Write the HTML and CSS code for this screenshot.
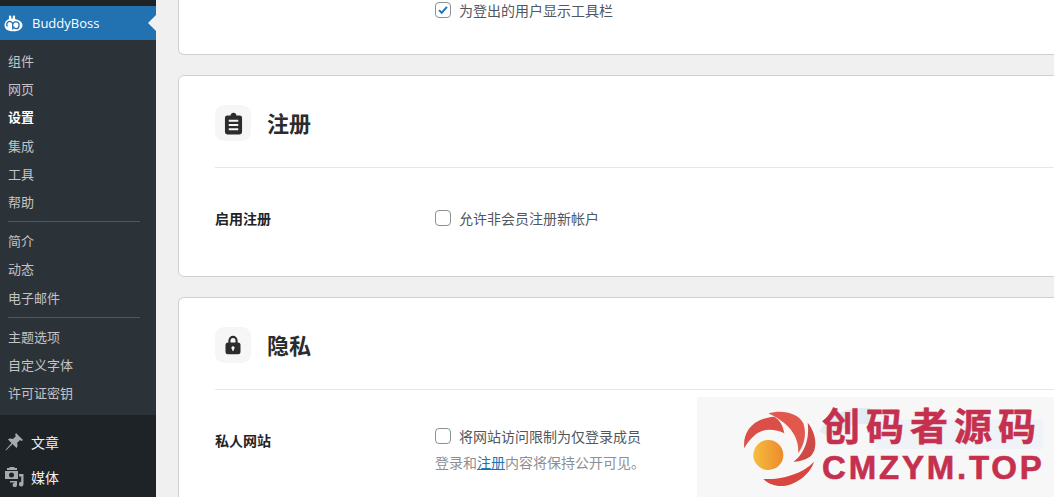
FILE: index.html
```html
<!DOCTYPE html>
<html lang="zh-CN">
<head>
    <meta charset="UTF-8">
    <meta name="viewport" content="width=device-width, initial-scale=1.0">
    <title>BuddyBoss 设置</title>
    <link rel="stylesheet" href="styles.css">
</head>
<body>
    <div class="layout">
        <!-- Admin sidebar -->
        <nav class="sidebar">
            <div class="menu-current">
                <svg viewBox="4 13 20 18" width="20" height="18">
                    <path fill="#fff" d="M9 15.500c0-1.300 2.300-1.300 2.300 0v2.200c.5-.1 1-.1 1.500-.1v-2.100c0-1.300 2.300-1.300 2.300 0v2.400c4 1 7.400 3.100 7.400 6.300 0 3.800-4.100 6.100-9 6.100s-9-1.600-9-6.100c0-3 2-5.200 4.500-6.200z"/>
                    <path fill="none" stroke="#2271b1" stroke-width="1.300" d="M7.500 25.500a3 3 0 1 1 5.200-2v5M12.700 23.500a3.200 3.200 0 0 1 6.300 1.200c0 2-1.500 3-3 3s-2.500-1-2.300-2.200"/>
                </svg>
                <span>BuddyBoss</span>
            </div>
            <ul class="submenu">
                <li>组件</li>
                <li>网页</li>
                <li class="active">设置</li>
                <li>集成</li>
                <li>工具</li>
                <li>帮助</li>
                <li class="sep"></li>
                <li>简介</li>
                <li>动态</li>
                <li>电子邮件</li>
                <li class="sep"></li>
                <li>主题选项</li>
                <li>自定义字体</li>
                <li>许可证密钥</li>
            </ul>
            <div class="menu-item">
                <svg viewBox="0 0 20 20" width="20" height="20">
                    <path fill="#a7aaad" d="M12 1l7 7-1.500 1-1.500-1-3 3c1 2 .5 4-.5 5l-4-4L2 18.500 1.500 18l6-7L4 7.500c1-1 3-1.500 5-.5l3-3-1-1z"/>
                </svg>
                <span>文章</span>
            </div>
            <div class="menu-item">
                <svg viewBox="0 0 20 20" width="20" height="20">
                    <path fill="#a7aaad" fill-rule="evenodd" d="M3 1h2l1-1h4l1 1h2v2H3zM1 4h13v8H1zM7.500 5.500a2.500 2.500 0 1 0 0 5 2.500 2.500 0 0 0 0-5zM15 7h4.500v10a2.300 2.300 0 1 1-2.300-2.200V9.500H15zM6 14h7v4a2.200 2.200 0 1 1-2.200-2.200V15.500H6z"/>
                </svg>
                <span>媒体</span>
            </div>
        </nav>

        <!-- Settings cards -->
        <main class="content">
            <section class="card card-cut">
                <div class="row row-first">
                    <div class="row-label"></div>
                    <div class="row-field">
                        <label class="check">
                            <span class="box">
                                <svg viewBox="0 0 16 16" width="16" height="16">
                                    <path fill="none" stroke="#2271b1" stroke-width="2.200" d="M3.500 8.200l3 3 6-6.800"/>
                                </svg>
                            </span>
                            为登出的用户显示工具栏
                        </label>
                    </div>
                </div>
            </section>

            <section class="card card-register">
                <header class="card-head">
                    <div class="head-icon">
                        <svg viewBox="0 0 20 24" width="19" height="23">
                            <path fill="#2c2c2c" fill-rule="evenodd" d="M7 3.500C7 1.800 8.300.8 10 .8s3 1 3 2.700h3.500A2.500 2.500 0 0 1 19 6v15a2.500 2.500 0 0 1-2.500 2.500h-13A2.500 2.500 0 0 1 1 21V6a2.500 2.500 0 0 1 2.500-2.500zM5 8v2.200h10V8zm0 4.500v2.200h10v-2.200zM5 17v2.200h10V17z"/>
                        </svg>
                    </div>
                    <h2>注册</h2>
                </header>
                <div class="row">
                    <div class="row-label">启用注册</div>
                    <div class="row-field">
                        <label class="check"><span class="box"></span>允许非会员注册新帐户</label>
                    </div>
                </div>
            </section>

            <section class="card card-last">
                <header class="card-head">
                    <div class="head-icon">
                        <svg viewBox="0 0 20 24" width="18" height="20">
                            <path fill="#2c2c2c" fill-rule="evenodd" d="M4.500 9V6.500a5.500 5.500 0 0 1 11 0V9h.5a3 3 0 0 1 3 3v8a3 3 0 0 1-3 3H4a3 3 0 0 1-3-3v-8a3 3 0 0 1 3-3zM7 9h6V6.500a3 3 0 0 0-6 0zm3 4.500a2 2 0 0 0-1 3.700V19h2v-1.800a2 2 0 0 0-1-3.700z"/>
                        </svg>
                    </div>
                    <h2>隐私</h2>
                </header>
                <div class="row row-tall">
                    <div class="row-label">私人网站</div>
                    <div class="row-field">
                        <label class="check"><span class="box"></span>将网站访问限制为仅登录成员</label>
                        <p class="hint">登录和<a href="#">注册</a>内容将保持公开可见。</p>
                    </div>
                </div>
            </section>
        </main>
    </div>

    <!-- Watermark lying over the page -->
    <div class="watermark">
        <svg class="wm-ghost" viewBox="0 0 240 100" width="237" height="100">
            <path fill="none" stroke="#e3ebf3" stroke-width="16" d="M12 38C22 22 42 15 62 20"/>
            <rect x="62" y="22" width="170" height="30" fill="#e9eff5" opacity=".6"/>
        </svg>
        <svg class="wm-swirl" viewBox="0 0 270 270" width="90" height="90">
            <defs>
                <linearGradient id="sun" x1="0" x2="1" y1="0" y2="0">
                    <stop offset="0" stop-color="#f6bd3f"/>
                    <stop offset="1" stop-color="#ec8a2c"/>
                </linearGradient>
            </defs>
            <path fill="#dc4f48" d="M28 145C22 100 50 55 118 50c17 10 27 30 30 50-28-15-68-15-88 5-15 13-25 25-32 40z"/>
            <path fill="#e2584d" d="M100 40c40-12 90-2 105 30 10 30 5 60-15 90 2-40-15-85-90-120z"/>
            <path fill="#cf4a46" d="M218 68c27 32 32 82 7 102-15 10-35 15-50 15 30-20 50-65 43-117z"/>
            <path fill="#d9463f" d="M85 237c45 3 115-12 152-52-12 40-62 77-107 73-20-3-35-10-45-21z"/>
            <circle cx="100" cy="165" r="45" fill="url(#sun)"/>
        </svg>
        <div class="wm-text">
            <div class="wm-title">创码者源码</div>
            <div class="wm-url">CMZYM.TOP</div>
        </div>
    </div>
</body>
</html>
```

FILE: styles.css
```css
/* General */
* {
    margin: 0;
    padding: 0;
    box-sizing: border-box;
}

html, body {
    height: 100%;
    overflow: hidden;
}

body {
    position: relative;
    background: #f0f0f1;
    color: #3c434a;
    font-family: "Noto Sans CJK SC", "Noto Sans", sans-serif;
    font-size: 14px;
}

.layout {
    display: flex;
    height: 497px;
    overflow: hidden;
}

/* Sidebar */
.sidebar {
    width: 156px;
    flex-shrink: 0;
    padding-top: 6px;
    background: #1d2327;
}

.menu-current {
    position: relative;
    display: flex;
    align-items: center;
    gap: 8px;
    height: 34px;
    padding-left: 4px;
    background: #2271b1;
    color: #fff;
    font-family: "Open Sans", "Noto Sans", sans-serif;
    font-size: 13px;
}

.menu-current::after {
    content: "";
    position: absolute;
    right: 0;
    top: 9px;
    border: 8px solid transparent;
    border-right-color: #f0f0f1;
    border-left-width: 0;
}

.submenu {
    list-style: none;
    height: 375px;
    padding-top: 7px;
    background: #2c3338;
    color: #c3c4c7;
    font-size: 13px;
}

.submenu li {
    height: 28.2px;
    padding-left: 8px;
    line-height: 28px;
}

.submenu .active {
    color: #fff;
    font-weight: 700;
}

.submenu .sep {
    height: 1px;
    width: 132px;
    margin: 5px 0 5px 8px;
    padding: 0;
    background: #50575e;
}

.menu-item {
    display: flex;
    align-items: center;
    gap: 7px;
    height: 35px;
    padding-left: 4px;
    color: #f0f0f1;
    font-size: 14px;
}

.submenu + .menu-item {
    margin-top: 9px;
}

/* Cards */
.content {
    flex: 1;
    min-width: 0;
    height: 497px;
    padding-left: 22px;
    overflow: hidden;
}

.card {
    width: calc(100% + 60px);
    margin-bottom: 20px;
    padding: 0 36px;
    background: #fff;
    border: 1px solid #d0d0d2;
    border-radius: 6px;
}

.card-cut {
    height: 55px;
    border-top: none;
    border-radius: 0 0 6px 6px;
}

.card-register {
    height: 202px;
}

.card-last {
    height: 200px;
    margin-bottom: 0;
    border-bottom: none;
    border-radius: 6px 6px 0 0;
}

.card-head {
    display: flex;
    align-items: center;
    gap: 16px;
    height: 92px;
    padding-top: 3px;
    border-bottom: 1px solid #e7e7e8;
}

.head-icon {
    display: flex;
    align-items: center;
    justify-content: center;
    width: 36px;
    height: 36px;
    border-radius: 9px;
    background: #f6f6f7;
}

.card-head h2 {
    padding-bottom: 2px;
    color: #2c2c2c;
    font-size: 22px;
    font-weight: 700;
}

.row {
    display: flex;
    padding-top: 37px;
}

.row-first {
    padding-top: 0;
}

.row-label {
    width: 220px;
    flex-shrink: 0;
    padding-top: 4px;
    color: #1d2327;
    font-weight: 700;
    line-height: 18px;
}

.row-field {
    padding-top: 4px;
    color: #50575e;
}

.row-first .row-field,
.row-first .row-label,
.row-tall .row-field {
    padding-top: 0;
}

.check {
    display: flex;
    align-items: center;
    gap: 8px;
    height: 18px;
    line-height: 18px;
}

.row-first .check {
    margin-top: 1px;
}

.box {
    display: flex;
    align-items: center;
    justify-content: center;
    width: 16px;
    height: 16px;
    background: #fff;
    border: 1px solid #8c8f94;
    border-radius: 4px;
}

.hint {
    margin-top: 7px;
    color: #8c8f94;
    line-height: 20px;
}

.hint a {
    color: #2271b1;
}

/* Watermark */
.watermark {
    position: absolute;
    left: 697px;
    top: 397px;
    display: flex;
    width: 357px;
    height: 100px;
    padding: 3px 0 0 38px;
    background: #f7f7f8;
    overflow: hidden;
}

.wm-ghost {
    position: absolute;
    left: 117px;
    top: 0;
}

.wm-swirl {
    position: relative;
    flex-shrink: 0;
    margin-right: -3px;
}

.wm-text {
    position: relative;
    flex-shrink: 0;
    padding-top: 4px;
    color: #c6304f;
    -webkit-text-stroke: 0.6px #c6304f;
}

.wm-title {
    font-size: 38px;
    font-weight: 700;
    letter-spacing: 6px;
    line-height: 40px;
    white-space: nowrap;
}

.wm-url {
    margin-top: 9px;
    font-family: "Liberation Sans", sans-serif;
    font-size: 33px;
    font-weight: 700;
    line-height: 30px;
    letter-spacing: 2.8px;
    white-space: nowrap;
}
```
